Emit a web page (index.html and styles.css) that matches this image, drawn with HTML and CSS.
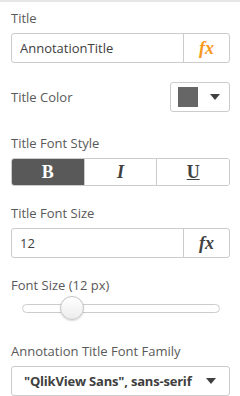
FILE: index.html
```html
<!DOCTYPE html>
<html lang="en">
<head>
  <meta charset="UTF-8" />
  <meta name="viewport" content="width=device-width, initial-scale=1.0"/>
  <title>Annotation Properties</title>
  <link rel="stylesheet" href="styles.css">
</head>
<body>
  <div class="panel">
    <div class="field">
      <label class="lbl">Title</label>
      <div class="input-group">
        <input class="txt" type="text" value="AnnotationTitle" />
        <button class="fx orange">fx</button>
      </div>
    </div>

    <div class="field row">
      <label class="lbl">Title Color</label>
      <div class="color-pick">
        <span class="swatch"></span>
        <span class="caret"></span>
      </div>
    </div>

    <div class="field style">
      <label class="lbl">Title Font Style</label>
      <div class="btn-group">
        <button class="seg active"><b>B</b></button>
        <button class="seg"><i>I</i></button>
        <button class="seg"><u>U</u></button>
      </div>
    </div>

    <div class="field size">
      <label class="lbl">Title Font Size</label>
      <div class="input-group">
        <input class="txt" type="text" value="12" />
        <button class="fx">fx</button>
      </div>
    </div>

    <div class="field slide">
      <label class="lbl">Font Size (12 px)</label>
      <div class="slider">
        <div class="track"></div>
        <div class="thumb"></div>
      </div>
    </div>

    <div class="field family">
      <label class="lbl">Annotation Title Font Family</label>
      <div class="select">
        <span class="sel-text">"QlikView Sans", sans-serif</span>
        <span class="caret"></span>
      </div>
    </div>
  </div>
</body>
</html>
```

FILE: styles.css
```css
body {
  margin: 0;
  font-family: 'Open Sans', sans-serif;
  font-size: 13px;
  color: #595959;
  background: #fff;
  border-top: 2px solid #e6e6e6;
}
.panel {
  padding: 6px 10px 0 11px;
}
.lbl {
  display: block;
  line-height: 20px;
  margin-bottom: 5px;
  color: #595959;
}
.input-group {
  display: flex;
  height: 30px;
  border: 1px solid #cccccc;
  border-radius: 3px;
  box-sizing: border-box;
}
.txt {
  flex: 1;
  min-width: 0;
  border: none;
  padding: 0 0 0 8px;
  font-family: inherit;
  font-size: 13px;
  color: #404040;
  background: transparent;
  outline: none;
}
.fx {
  width: 46px;
  border: none;
  border-left: 1px solid #cccccc;
  background: transparent;
  font-family: 'Liberation Serif', serif;
  font-style: italic;
  font-weight: bold;
  font-size: 18px;
  color: #404040;
  padding: 0;
}
.fx.orange {
  color: #f8981d;
}
.row {
  display: flex;
  align-items: center;
  justify-content: space-between;
  margin-top: 19px;
}
.row .lbl {
  margin: 0;
}
.color-pick {
  width: 60px;
  height: 30px;
  box-sizing: border-box;
  border: 1px solid #cccccc;
  border-radius: 3px;
  display: flex;
  align-items: center;
  padding-left: 7px;
  gap: 12px;
}
.swatch {
  width: 20px;
  height: 20px;
  background: #666666;
}
.caret {
  width: 0;
  height: 0;
  border-left: 5px solid transparent;
  border-right: 5px solid transparent;
  border-top: 6px solid #404040;
}
.style {
  margin-top: 21px;
}
.btn-group {
  display: flex;
  height: 28px;
  border: 1px solid #cccccc;
  border-radius: 3px;
  box-sizing: border-box;
  overflow: hidden;
}
.seg {
  flex: 1;
  border: none;
  border-left: 1px solid #cccccc;
  background: #fff;
  font-family: 'Liberation Serif', serif;
  font-size: 18px;
  font-weight: bold;
  color: #404040;
  padding: 0;
}
.seg:first-child {
  border-left: none;
}
.seg.active {
  background: #595959;
  color: #fff;
}
.size {
  margin-top: 17px;
}
.slide {
  margin-top: 17px;
}
.slide .lbl {
  margin-bottom: 0;
}
.slider {
  position: relative;
  height: 27px;
  margin: 0 10px 0 11px;
}
.track {
  position: absolute;
  left: 0;
  right: 0;
  top: 9px;
  height: 9px;
  box-sizing: border-box;
  border: 1px solid #cccccc;
  border-radius: 5px;
  background: #fff;
}
.thumb {
  position: absolute;
  left: 38px;
  top: 1px;
  width: 24px;
  height: 24px;
  box-sizing: border-box;
  border-radius: 50%;
  border: 1px solid #c4c4c4;
  background: linear-gradient(#ffffff, #ececec);
  box-shadow: 0 1px 2px rgba(0, 0, 0, 0.15);
}
.family {
  margin-top: 19px;
}
.select {
  display: flex;
  align-items: center;
  justify-content: space-between;
  height: 30px;
  box-sizing: border-box;
  border: 1px solid #cccccc;
  border-radius: 3px;
  padding: 0 13px 0 12px;
}
.sel-text {
  font-weight: bold;
  color: #404040;
  letter-spacing: -0.2px;
}
```
